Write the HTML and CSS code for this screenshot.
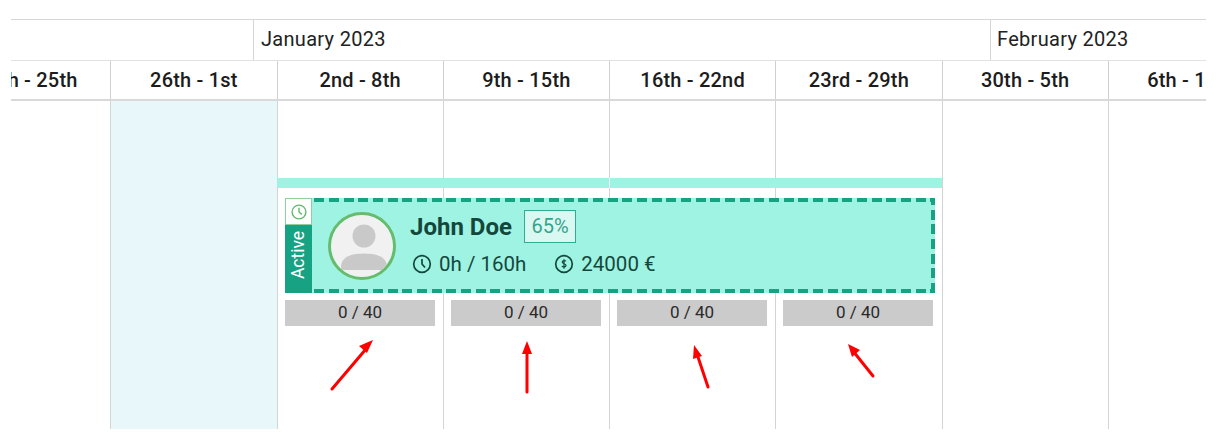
FILE: index.html
```html
<!DOCTYPE html>
<html>

<head>
    <title>Resource Timeline</title>
    <link rel="stylesheet" href="styles.css">
</head>

<body>
    <div class="timeline">
        <div class="months">
            <div class="month month-prev"></div>
            <div class="month month-jan">January 2023</div>
            <div class="month month-feb">February 2023</div>
        </div>

        <div class="track">
            <div class="weeks">
                <div class="week">19th - 25th</div>
                <div class="week">26th - 1st</div>
                <div class="week">2nd - 8th</div>
                <div class="week">9th - 15th</div>
                <div class="week">16th - 22nd</div>
                <div class="week">23rd - 29th</div>
                <div class="week">30th - 5th</div>
                <div class="week">6th - 12th</div>
            </div>

            <div class="grid">
                <div class="col"></div>
                <div class="col col-today"></div>
                <div class="col"></div>
                <div class="col"></div>
                <div class="col"></div>
                <div class="col"></div>
                <div class="col"></div>
                <div class="col"></div>

                <!-- booking lies over the columns -->
                <div class="booking">
                    <div class="booking-bar">
                        <span class="bar-part"></span>
                        <span class="bar-part"></span>
                    </div>

                    <div class="card">
                        <div class="card-side">
                            <div class="side-icon">
                                <svg width="16" height="16" viewBox="0 0 16 16" fill="none" stroke="#5fb96b" stroke-width="1.4">
                                    <circle cx="8" cy="8" r="6.9" />
                                    <path d="M8 3.8V8l2.8 2.4" />
                                </svg>
                            </div>
                            <div class="side-status"><span>Active</span></div>
                        </div>

                        <div class="avatar">
                            <svg width="62" height="62" viewBox="0 0 62 62">
                                <circle cx="31" cy="31" r="31" fill="#f1f1f1" />
                                <circle cx="33" cy="21" r="11.500" fill="#c9c9c9" />
                                <path d="M10 52c0-10 10-13.500 23-13.500S56 42 56 52c0 1.500-.5 3-1 3H11c-.5 0-1-1.500-1-3z" fill="#c9c9c9" />
                            </svg>
                        </div>

                        <div class="card-info">
                            <div class="card-title">
                                <span class="card-name">John Doe</span>
                                <span class="card-pct">65%</span>
                            </div>
                            <div class="card-stats">
                                <span class="stat">
                                    <svg width="20" height="20" viewBox="0 0 20 20" fill="none" stroke="#14473c" stroke-width="1.700">
                                        <circle cx="10" cy="10" r="8.300" />
                                        <path d="M10 5v5l3 3.500" />
                                    </svg>
                                    0h / 160h
                                </span>
                                <span class="stat">
                                    <svg width="20" height="20" viewBox="0 0 20 20" fill="none" stroke="#14473c" stroke-width="1.700">
                                        <circle cx="10" cy="10" r="8.300" />
                                        <path d="M12 7.200c-.5-.8-3.800-1-3.800.9 0 1.900 3.800 1.300 3.800 3.300 0 2-3.500 1.700-4.100.7M10 5.300v9.400" stroke-width="1.200" />
                                    </svg>
                                    24000 €
                                </span>
                            </div>
                        </div>
                    </div>

                    <div class="capacity">
                        <div class="cap">0 / 40</div>
                        <div class="cap">0 / 40</div>
                        <div class="cap">0 / 40</div>
                        <div class="cap">0 / 40</div>
                    </div>
                </div>

                <!-- red arrows drawn on top of the screenshot -->
                <svg class="arrows" width="1218" height="444" viewBox="0 0 1218 444">
                    <g stroke="#ff0000" stroke-width="3" stroke-linecap="round" fill="#ff0000">
                        <path d="M332 389L366 349" />
                        <path d="M527 392V352" />
                        <path d="M708 387L697 354" />
                        <path d="M873 376L853 351" />
                    </g>
                    <g fill="#ff0000">
                        <path d="M373 340L367 353L359 346z" />
                        <path d="M527 341L532 354H522z" />
                        <path d="M694 345L702 356L693 359z" />
                        <path d="M848 344L860 350L852 357z" />
                    </g>
                </svg>
            </div>
        </div>
    </div>
</body>

</html>
```

FILE: styles.css
```css
body {
    margin: 0;
    font-family: "Roboto", sans-serif;
    background: #fff;
    color: #212121;
}

.timeline {
    width: 1195px;
    margin: 19px 0 0 11px;
    overflow: hidden;
}

.months {
    display: flex;
    height: 40px;
    border-top: 1px solid #d6d6d6;
    border-bottom: 1px solid #e2e2e2;
}

.month {
    box-sizing: border-box;
    padding-left: 7px;
    font-size: 20px;
    letter-spacing: .3px;
    line-height: 38px;
    color: #222;
}

.month-prev {
    width: 242px;
}

.month-jan {
    width: 737px;
    border-left: 1px solid #d6d6d6;
}

.month-feb {
    flex: 1;
    padding-left: 6px;
    border-left: 1px solid #d6d6d6;
}

.track {
    width: 1330px;
    margin-left: -67px;
}

.weeks {
    display: flex;
    height: 38px;
    border-bottom: 2px solid #d9d9d9;
}

.week {
    flex: 1;
    box-sizing: border-box;
    border-left: 1px solid #d0d0d0;
    font-size: 20px;
    font-weight: 500;
    letter-spacing: .2px;
    line-height: 38px;
    text-align: center;
    white-space: nowrap;
    color: #1c1c1c;
}

.grid {
    position: relative;
    display: flex;
    height: 328px;
}

.col {
    flex: 1;
    box-sizing: border-box;
    border-left: 1px solid #d4d4d4;
}

.col-today {
    background: #e8f8fa;
}

.booking {
    position: absolute;
    left: 333px;
    top: 77px;
    width: 665px;
}

.booking-bar {
    display: flex;
    gap: 1px;
    height: 10px;
    background: #fff;
}

.bar-part {
    flex: 1;
    background: #9ff3e2;
}

/* dashes are longer than a dashed border gives, so gradients */
.card {
    display: flex;
    align-items: center;
    box-sizing: border-box;
    width: 650px;
    height: 95px;
    margin: 10px 0 0 8px;
    background:
        repeating-linear-gradient(90deg, #17a283 0 10px, transparent 10px 14.670px) top / 100% 4px no-repeat,
        repeating-linear-gradient(90deg, #17a283 0 10px, transparent 10px 14.670px) bottom / 100% 4px no-repeat,
        repeating-linear-gradient(0deg, #17a283 0 10px, transparent 10px 14.670px) right / 4px 100% no-repeat,
        #9ff3e2;
    color: #14473c;
}

.card-side {
    display: flex;
    flex-direction: column;
    align-self: stretch;
    width: 27px;
}

.side-icon {
    display: flex;
    align-items: center;
    justify-content: center;
    height: 27px;
    box-sizing: border-box;
    border: 1px solid #8fcf9c;
    background: #fff;
}

.side-status {
    flex: 1;
    display: flex;
    align-items: center;
    justify-content: center;
    padding-bottom: 8px;
    background: #17a283;
    color: #fff;
    font-size: 17.500px;
}

.side-status span {
    transform: rotate(-90deg);
}

.avatar {
    width: 62px;
    height: 62px;
    margin-left: 16px;
    border: 3px solid #69bb6c;
    border-radius: 50%;
    overflow: hidden;
    flex-shrink: 0;
}

.avatar svg {
    display: block;
}

.card-info {
    margin: -5px 0 0 14px;
}

.card-title {
    display: flex;
    align-items: center;
    gap: 12px;
}

.card-name {
    font-size: 24px;
    font-weight: 700;
}

.card-pct {
    box-sizing: border-box;
    height: 33px;
    padding: 0 6.500px;
    border: 1px solid #2dae92;
    background: #d9f8f1;
    color: #35a48d;
    font-size: 20px;
    line-height: 31px;
}

.card-stats {
    display: flex;
    gap: 28px;
    margin-top: 9px;
    padding-left: 2px;
    font-size: 20.500px;
}

.stat {
    display: flex;
    align-items: center;
    gap: 7px;
}

.capacity {
    display: flex;
    gap: 16px;
    margin: 7px 0 0 8px;
}

.cap {
    width: 150px;
    height: 26px;
    background: #cbcbcb;
    font-size: 17px;
    line-height: 24px;
    text-align: center;
    color: #2a2a2a;
}

.arrows {
    position: absolute;
    left: 56px;
    top: -101px;
    overflow: visible;
    pointer-events: none;
}
```
